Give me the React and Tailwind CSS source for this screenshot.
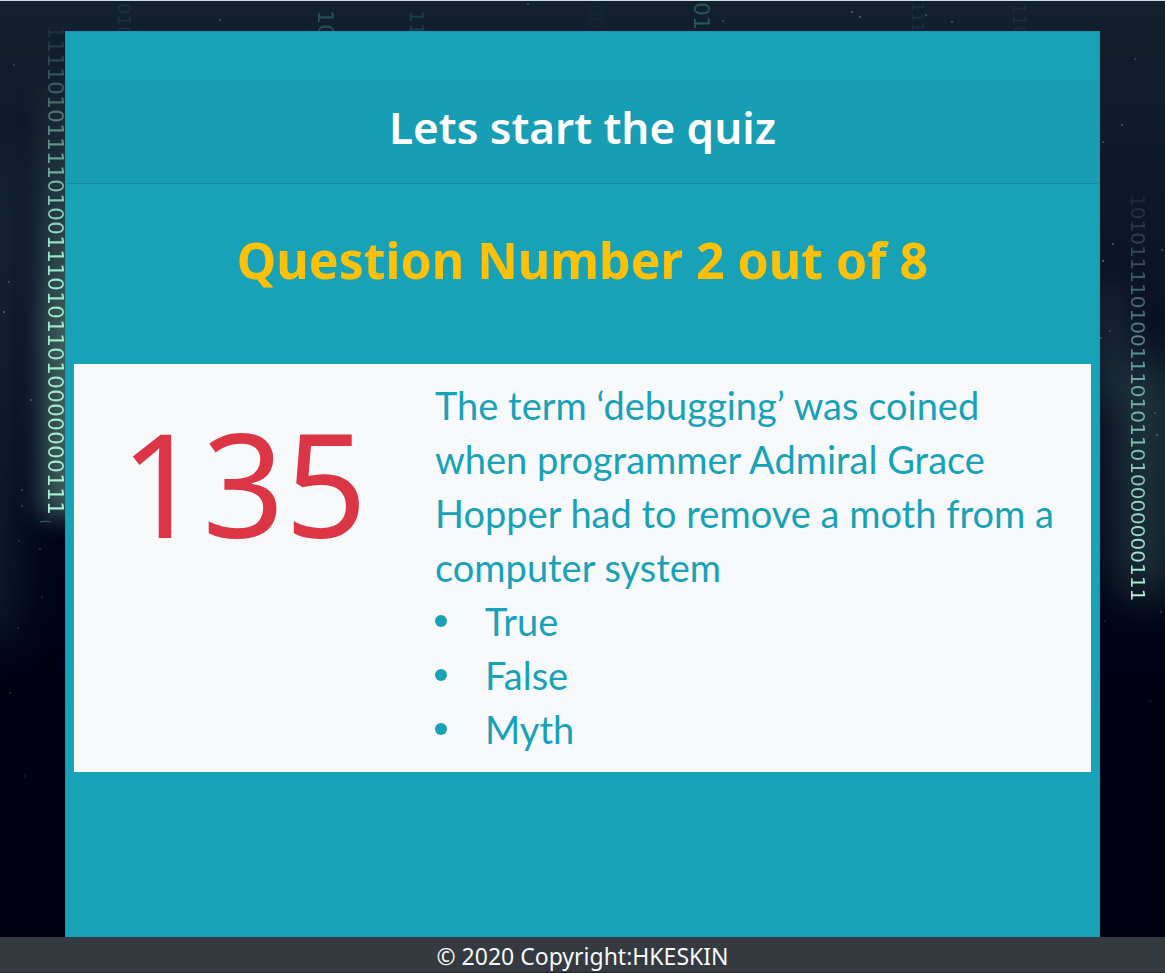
const streams = [
  {
    text: '11110101111010011101011010000000111',
    style:
      'left-[43px] top-[24px] text-[22px] leading-6 bg-linear-to-b from-[#9ff0d0]/5 via-[#97e6cb] via-45% to-[#a9f0d6]',
  },
  {
    text: '10101111010011101011010000000111',
    style:
      'right-[15px] top-[193px] text-[20px] leading-6 bg-linear-to-b from-[#6fb3a5]/10 via-[#7cc0ae]/90 via-50% to-[#b4f5dc]',
  },
  { text: '010', style: 'left-[114px] top-[2px] text-[18px] leading-5 bg-[#1b3340]' },
  { text: '10', style: 'left-[313px] top-[9px] text-[22px] leading-6 bg-[#24505a]' },
  { text: '11', style: 'left-[405px] top-[9px] text-[20px] leading-6 bg-[#1c4048]' },
  { text: '00', style: 'left-[586px] top-[3px] text-[20px] leading-5 bg-[#142634]' },
  { text: '011', style: 'left-[689px] top-[1px] text-[22px] leading-6 bg-[#285560]' },
  { text: '111', style: 'left-[907px] top-[1px] text-[16px] leading-5 bg-[#1a2f3d]' },
  { text: '110', style: 'left-[1009px] top-[2px] text-[18px] leading-5 bg-[#1b2c3c]' },
];

const specks = [
  [14, 64, 0.3], [9, 281, 0.4], [4, 311, 0.5], [31, 399, 0.5], [22, 489, 0.4], [22, 505, 0.3],
  [40, 548, 0.3], [19, 540, 0.2], [42, 596, 0.2], [10, 692, 0.3], [18, 627, 0.2], [25, 775, 0.2],
  [1135, 58, 0.3], [1122, 124, 0.4], [1103, 141, 0.4], [1113, 243, 0.5], [1103, 260, 0.6],
  [1162, 249, 0.4], [1110, 330, 0.3], [1101, 337, 0.4], [1157, 434, 0.5], [1155, 412, 0.3],
  [1105, 620, 0.2], [1161, 611, 0.3], [1150, 700, 0.2], [220, 19, 0.4], [528, 3, 0.4],
  [852, 11, 0.5], [860, 16, 0.5], [926, 14, 0.4], [952, 21, 0.4], [723, 20, 0.3],
];

const options = ['True', 'False', 'Myth'];

function Backdrop() {
  return (
    <div aria-hidden="true" className="absolute inset-0 overflow-hidden bg-linear-to-b from-[#12202f] via-[#0c1228] via-30% to-[#000013] to-75%">
      <div className="absolute -left-8 top-[160px] h-[480px] w-11 bg-[#20404a]/50 blur-xl" />
      <div className="absolute left-[42px] top-[60px] h-[455px] w-12 bg-linear-to-b from-transparent to-[#4a7268]/80 to-60% blur-md" />
      <div className="absolute -right-1 top-[360px] h-[235px] w-12 bg-[#3b6259]/60 blur-xl" />
      <div className="absolute right-[42px] top-[290px] h-[110px] w-6 bg-[#2c4c50]/50 blur-lg" />
      <svg className="absolute inset-0 h-full w-full">
        {specks.map(([x, y, o]) => (
          <circle key={`${x}-${y}`} cx={x} cy={y} r="1" fill="#8fb4b8" opacity={o} />
        ))}
        <path d="M40 521q6-2 11 0" stroke="#4f7f85" fill="none" opacity=".7" />
      </svg>
      {streams.map((s) => (
        <span
          key={s.style}
          className={`absolute whitespace-nowrap bg-clip-text font-['DejaVu_Sans',sans-serif] text-transparent [writing-mode:vertical-rl] ${s.style}`}
        >
          {s.text}
        </span>
      ))}
    </div>
  );
}

export default function App() {
  return (
    <div className="relative flex min-h-screen flex-col border-t border-[#c9dfe5] font-['Noto_Sans',sans-serif]">
      <Backdrop />
      <main className="relative flex flex-1 flex-col px-[65px] pt-[30px]">
        <section className="flex flex-1 flex-col border border-b-0 border-[#1896aa] bg-[#17a2b8] pt-[47px] text-center">
          <header className="border-b border-[#148ca0] bg-[#189eb4] px-5 pt-4 pb-6">
            <h1 className="text-[44px] leading-16 font-semibold text-white">Lets start the quiz</h1>
          </header>
          <div className="px-2 pt-10">
            <h2 className="text-[50px] leading-[72px] font-bold text-[#ffc107]">Question Number 2 out of 8</h2>
            <div className="mt-17 grid grid-cols-3 bg-[#f8f9fb] pt-[14px] pb-4">
              <div className="text-[144px] leading-[208px] text-[#dc3545]">135</div>
              <div className="col-span-2 pr-5 pl-[22px] text-left font-['Lato',sans-serif] text-[38px] leading-[54px] text-[#17a2b8]">
                <p>The term ‘debugging’ was coined when programmer Admiral Grace Hopper had to remove a moth from a computer system</p>
                <ul>
                  {options.map((option) => (
                    <li key={option} className="flex items-center gap-[38px] before:size-3 before:rounded-full before:bg-[#17a2b8]">
                      {option}
                    </li>
                  ))}
                </ul>
              </div>
            </div>
          </div>
        </section>
      </main>
      <footer className="relative border-b border-[#25282c] bg-[#343a40] pt-1 text-center text-[23px] leading-[31px] text-[#f8f9fa]">
        © 2020 Copyright:HKESKIN
      </footer>
    </div>
  );
}
